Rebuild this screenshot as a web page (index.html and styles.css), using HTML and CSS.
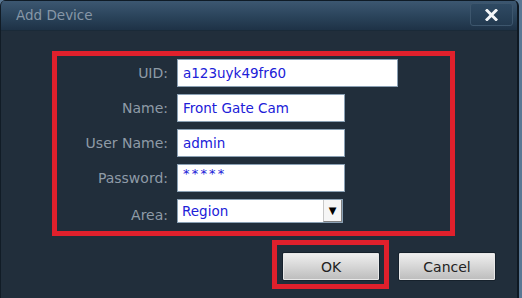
FILE: index.html
```html
<!DOCTYPE html>
<html lang="en">
<head>
  <meta charset="UTF-8" />
  <title>Add Device</title>
  <link rel="stylesheet" href="styles.css">
</head>
<body>
  <div class="dialog">
    <div class="titlebar">
      <span class="title">Add Device</span>
      <button class="close">
        <svg width="13" height="12" viewBox="0 0 13 12">
          <path d="M2 1.5 L11 10.5 M11 1.5 L2 10.5" stroke="#f4f6f8" stroke-width="3" stroke-linecap="square" />
        </svg>
      </button>
    </div>

    <div class="content">
      <div class="highlight form">
        <label class="label">UID:</label>
        <input class="field wide" type="text" value="a123uyk49fr60" readonly />

        <label class="label">Name:</label>
        <input class="field" type="text" value="Front Gate Cam" readonly />

        <label class="label">User Name:</label>
        <input class="field" type="text" value="admin" readonly />

        <label class="label">Password:</label>
        <input class="field pass" type="text" value="*****" readonly />

        <label class="label area">Area:</label>
        <div class="select">
          <span class="select-text">Region</span>
          <span class="arrow">&#9660;</span>
        </div>
      </div>

      <div class="actions">
        <div class="highlight ok-box">
          <button class="btn">OK</button>
        </div>
        <button class="btn cancel">Cancel</button>
      </div>
    </div>
  </div>
</body>
</html>
```

FILE: styles.css
```css
body {
  margin: 0;
  height: 298px;
  overflow: hidden;
  background: #5a7894;
  font-family: 'DejaVu Sans', Tahoma, Verdana, sans-serif;
}
.dialog {
  width: 516px;
  height: 298px;
  background: #212e3b;
  border-left: 1px solid #111c26;
  border-right: 2px solid #0e1822;
  border-radius: 6px 6px 0 0;
  overflow: hidden;
}
.titlebar {
  height: 31px;
  display: flex;
  align-items: flex-start;
  justify-content: space-between;
  padding: 0 4px 0 15px;
  background: linear-gradient(#3c5771, #2a435a 55%, #1e3246);
  border-top: 1px solid #0f1b26;
  border-bottom: 1px solid #1a2a38;
  box-sizing: border-box;
}
.title {
  color: #8797a7;
  font-size: 13.5px;
  margin-top: 6px;
}
.close {
  width: 43px;
  height: 23px;
  margin-top: 2px;
  display: flex;
  align-items: center;
  justify-content: center;
  border: 1px solid #3d566d;
  border-radius: 3px;
  background: linear-gradient(#2f4a63, #233a50);
  padding: 0;
}
.content {
  padding-top: 20px;
}
.highlight {
  border: 5px solid #e0202c;
}
.form {
  width: 403px;
  height: 185px;
  margin-left: 51px;
  padding-top: 3px;
  box-sizing: border-box;
  display: grid;
  grid-template-columns: 111px auto;
  column-gap: 9px;
  row-gap: 7px;
  grid-auto-rows: 28px;
  align-items: center;
  justify-items: start;
  align-content: start;
}
.label {
  justify-self: end;
  color: #8f9ba7;
  font-size: 14px;
}
.label.area {
  padding-top: 4px;
}
.field {
  width: 168px;
  height: 28px;
  box-sizing: border-box;
  border: 1px solid #8aa0b4;
  background: #fff;
  color: #2020d8;
  font-family: inherit;
  font-size: 13.5px;
  padding: 0 0 0 5px;
  outline: none;
}
.field.wide {
  width: 221px;
}
.field.pass {
  padding-bottom: 9px;
  font-size: 13px;
  letter-spacing: 2.2px;
}
.select {
  width: 166px;
  height: 24px;
  align-self: start;
  display: flex;
  align-items: center;
  justify-content: space-between;
  background: #fff;
  border: 1px solid #8aa0b4;
  box-sizing: border-box;
}
.select-text {
  color: #2020d8;
  font-size: 13.5px;
  padding-left: 4px;
}
.arrow {
  width: 19px;
  height: 22px;
  display: flex;
  align-items: center;
  justify-content: center;
  background: #f6f6f6;
  border-left: 1px solid #c8c8c8;
  border-bottom: 1px solid #808080;
  border-right: 1px solid #808080;
  box-sizing: border-box;
  font-size: 10px;
  color: #000;
}
.actions {
  display: flex;
  align-items: flex-start;
  gap: 9px;
  margin-top: 4px;
  padding-left: 271px;
}
.ok-box {
  width: 117px;
  height: 49px;
  box-sizing: border-box;
  padding: 7px 0 0 5px;
}
.btn {
  width: 98px;
  height: 29px;
  border: 1px solid #16212c;
  border-radius: 2px;
  background: linear-gradient(#f0f0f0, #d6d6d6 50%, #bcbcbc);
  color: #222;
  font-family: inherit;
  font-size: 14px;
  padding: 0;
  box-shadow: inset 0 0 0 1px #e8e8e8;
}
.cancel {
  margin-top: 12px;
}
```
